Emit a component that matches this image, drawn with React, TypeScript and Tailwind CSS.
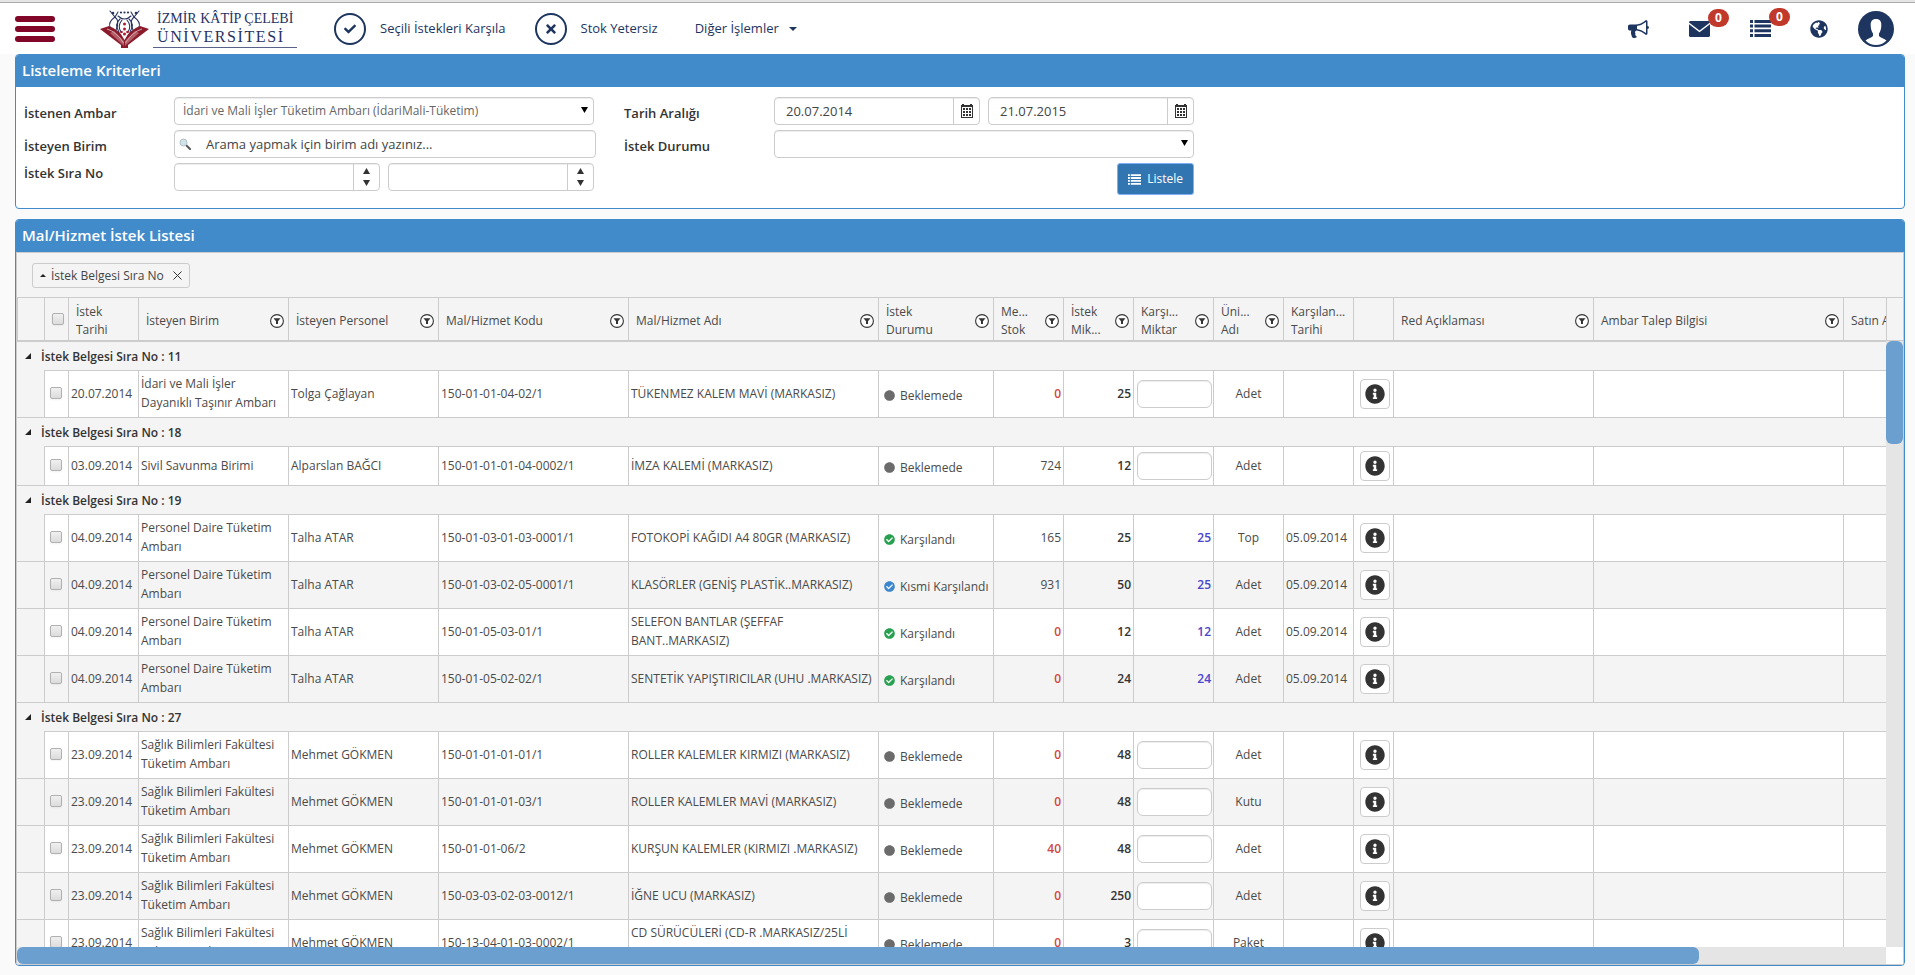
import { ReactNode } from "react";
import clsx from "clsx";
import { FaCheck, FaCheckCircle, FaCircle, FaGlobeAmericas, FaInfoCircle, FaTimes } from "react-icons/fa";

type Status = "Beklemede" | "Karşılandı" | "Kısmi Karşılandı";

type Row = {
  date: string;
  unit: string;
  person: string;
  code: string;
  name: string;
  status: Status;
  stock: number;
  lowStock?: boolean;
  amount: number;
  met?: number;
  measure: string;
  metDate?: string;
};

const columns = [
  { label: "İstek\nTarihi", width: "w-[70px]" },
  { label: "İsteyen Birim", width: "w-[150px]", filter: true },
  { label: "İsteyen Personel", width: "w-[150px]", filter: true },
  { label: "Mal/Hizmet Kodu", width: "w-[190px]", filter: true },
  { label: "Mal/Hizmet Adı", width: "w-[250px]", filter: true },
  { label: "İstek\nDurumu", width: "w-[115px]", filter: true },
  { label: "Me...\nStok", width: "w-[70px]", filter: true },
  { label: "İstek\nMik...", width: "w-[70px]", filter: true },
  { label: "Karşı...\nMiktar", width: "w-[80px]", filter: true },
  { label: "Üni...\nAdı", width: "w-[70px]", filter: true },
  { label: "Karşılan...\nTarihi", width: "w-[70px]" },
  { label: "", width: "w-[40px]" },
  { label: "Red Açıklaması", width: "w-[200px]", filter: true },
  { label: "Ambar Talep Bilgisi", width: "w-[250px]", filter: true },
  { label: "Satın Alma Bilgisi", width: "w-[250px]", filter: true },
];

const personel = { date: "04.09.2014", unit: "Personel Daire Tüketim Ambarı", person: "Talha ATAR", metDate: "05.09.2014" };
const saglik = {
  date: "23.09.2014",
  unit: "Sağlık Bilimleri Fakültesi Tüketim Ambarı",
  person: "Mehmet GÖKMEN",
  status: "Beklemede" as Status,
};

const groups: { no: number; rows: Row[] }[] = [
  {
    no: 11,
    rows: [
      { date: "20.07.2014", unit: "İdari ve Mali İşler Dayanıklı Taşınır Ambarı", person: "Tolga Çağlayan", code: "150-01-01-04-02/1", name: "TÜKENMEZ KALEM MAVİ (MARKASIZ)", status: "Beklemede", stock: 0, lowStock: true, amount: 25, measure: "Adet" },
    ],
  },
  {
    no: 18,
    rows: [
      { date: "03.09.2014", unit: "Sivil Savunma Birimi", person: "Alparslan BAĞCI", code: "150-01-01-01-04-0002/1", name: "İMZA KALEMİ (MARKASIZ)", status: "Beklemede", stock: 724, amount: 12, measure: "Adet" },
    ],
  },
  {
    no: 19,
    rows: [
      { ...personel, code: "150-01-03-01-03-0001/1", name: "FOTOKOPİ KAĞIDI A4 80GR (MARKASIZ)", status: "Karşılandı", stock: 165, amount: 25, met: 25, measure: "Top" },
      { ...personel, code: "150-01-03-02-05-0001/1", name: "KLASÖRLER (GENİŞ PLASTİK..MARKASIZ)", status: "Kısmi Karşılandı", stock: 931, amount: 50, met: 25, measure: "Adet" },
      { ...personel, code: "150-01-05-03-01/1", name: "SELEFON BANTLAR (ŞEFFAF BANT..MARKASIZ)", status: "Karşılandı", stock: 0, lowStock: true, amount: 12, met: 12, measure: "Adet" },
      { ...personel, code: "150-01-05-02-02/1", name: "SENTETİK YAPIŞTIRICILAR (UHU .MARKASIZ)", status: "Karşılandı", stock: 0, lowStock: true, amount: 24, met: 24, measure: "Adet" },
    ],
  },
  {
    no: 27,
    rows: [
      { ...saglik, code: "150-01-01-01-01/1", name: "ROLLER KALEMLER KIRMIZI (MARKASIZ)", stock: 0, lowStock: true, amount: 48, measure: "Adet" },
      { ...saglik, code: "150-01-01-01-03/1", name: "ROLLER KALEMLER MAVİ (MARKASIZ)", stock: 0, lowStock: true, amount: 48, measure: "Kutu" },
      { ...saglik, code: "150-01-01-06/2", name: "KURŞUN KALEMLER (KIRMIZI .MARKASIZ)", stock: 40, lowStock: true, amount: 48, measure: "Adet" },
      { ...saglik, code: "150-03-03-02-03-0012/1", name: "İĞNE UCU (MARKASIZ)", stock: 0, lowStock: true, amount: 250, measure: "Adet" },
      { ...saglik, code: "150-13-04-01-03-0002/1", name: "CD SÜRÜCÜLERİ (CD-R .MARKASIZ/25Lİ PAKET)", stock: 0, lowStock: true, amount: 3, measure: "Paket" },
    ],
  },
];

const field = "h-7 w-full rounded-[4px] border border-[#ccc] bg-white shadow-[inset_0_1px_1px_rgba(0,0,0,0.075)] outline-none";

function Logo() {
  return (
    <svg viewBox="0 0 49 38" className="h-[38px] w-[49px] shrink-0" aria-hidden="true">
      <path d="M0 19 L9 16 Q20 20 24.500 30 Q29 20 40 16 L49 19 L28 35 V38 H21 V35 Z" fill="#8b1a2b" />
      <path d="M7 19 Q17 22 23.500 33 M42 19 Q32 22 25.500 33" fill="none" stroke="#fff" strokeWidth="1" opacity="0.6" />
      <path d="M14 21 L24 31 L24 36 L10 23 Z M35 21 L25 31 L25 36 L39 23 Z" fill="#d9a3a8" opacity="0.5" />
      <g fill="none" stroke="#27325f" strokeWidth="1.100" strokeLinecap="round">
        <path d="M10 1 L15 7 L18 2 M15 7 Q8 12 10 17 M15 7 Q20 11 16 20" />
        <path d="M39 1 L34 7 L31 2 M34 7 Q41 12 39 17 M34 7 Q29 11 33 20" />
        <path d="M18 6 Q24.500 12 31 6 M20 9 Q14 14 19 22 M29 9 Q35 14 30 22 M22 10 Q17 16 21 22 M27 10 Q32 16 28 22" />
      </g>
      <g fill="#27325f">
        <circle cx="13" cy="3" r="1.300" />
        <circle cx="36" cy="3" r="1.300" />
        <circle cx="21" cy="2.500" r="1.100" />
        <circle cx="24.500" cy="2.500" r="1.100" />
        <circle cx="28" cy="2.500" r="1.100" />
      </g>
      <g fill="#b01a2e">
        <circle cx="24.500" cy="14" r="1.500" />
        <circle cx="24.500" cy="19" r="1.500" />
        <circle cx="21.500" cy="22" r="1.300" />
        <circle cx="27.500" cy="22" r="1.300" />
        <circle cx="24.500" cy="24" r="1.500" />
      </g>
    </svg>
  );
}

function ListIcon({ className }: { className: string }) {
  return (
    <svg viewBox="0 0 21 17" className={className} fill="currentColor" aria-hidden="true">
      <path d="M0 0h3v3H0zM0 4.600h3v3H0zM0 9.300h3v3H0zM0 14h3v3H0zM4.500 0H21v3H4.500zM4.500 4.600H21v3H4.500zM4.500 9.300H21v3H4.500zM4.500 14H21v3H4.500z" />
    </svg>
  );
}

function BullhornIcon() {
  return (
    <svg viewBox="0 128 1792 1536" className="h-[18px] w-[21px]" fill="currentColor" aria-hidden="true">
      <path d="M1664 640q53 0 90.500 37.500t37.500 90.500-37.500 90.500-90.500 37.500v384q0 52-38 90t-90 38q-417-347-812-380-58 19-91 66t-31 100.500 40 92.500q-20 33-23 65.500t6 58 33.500 55 48 50 61.500 50.500q-29 58-111.500 83t-168.500 11.500-132-55.500q-7-23-29.500-87.500t-32-94.500-23-89-15-101 3.500-98.500 22-110.500h-122q-66 0-113-47t-47-113v-192q0-66 47-113t113-47h480q435 0 896-384 52 0 90 38t38 90v384zm-128 604v-954q-394 302-768 343v270q377 42 768 341z" />
    </svg>
  );
}

function EnvelopeIcon() {
  return (
    <svg viewBox="0 0 21 16" className="h-4 w-[21px]" fill="currentColor" aria-hidden="true">
      <path d="M1 0h19l1 1v.6L10.500 9.500 0 1.600V1z" />
      <path d="M0 3.200l10.500 8L21 3.200V15l-1 1H1l-1-1z" />
    </svg>
  );
}

function AvatarIcon() {
  return (
    <svg viewBox="0 0 36 36" className="h-9 w-9" aria-hidden="true">
      <circle cx="18" cy="18" r="18" fill="#1d355f" />
      <path d="M18 8c4 0 5.500 2.500 5.300 6.500 0 3.500-1 6-2.300 8v2.500c1.500 2 5.500 2.500 7.500 4.500-3 3.200-6.500 4.500-10.500 4.500S10.500 32.700 7.500 29.500c2-2 6-2.500 7.500-4.500v-2.500c-1.300-2-2.300-4.500-2.300-8C12.500 10.500 14 8 18 8z" fill="#fff" />
    </svg>
  );
}

function CalendarIcon() {
  return (
    <svg viewBox="0 0 12 14" className="h-[14px] w-3" shapeRendering="crispEdges" aria-hidden="true">
      <path d="M0 1h1V0h2v1h6V0h2v1h1v13H0z" fill="#333" />
      <path d="M1 3h10v10H1z" fill="#fff" />
      <path d="M2 4h2v2H2zM5 4h2v2H5zM8 4h2v2H8zM2 7h2v2H2zM5 7h2v2H5zM8 7h2v2H8zM2 10h2v2H2zM5 10h2v2H5zM8 10h2v2H8z" fill="#333" />
    </svg>
  );
}

function FilterIcon() {
  return (
    <svg viewBox="0 0 14 14" className="h-[14px] w-[14px]" aria-hidden="true">
      <circle cx="7" cy="7" r="6.400" fill="#fff" stroke="#333" strokeWidth="1.100" />
      <path d="M3.500 4.300h7L8 7.200V10H6V7.200z" fill="#333" />
    </svg>
  );
}

function Triangle({ up, className }: { up?: boolean; className?: string }) {
  return (
    <svg viewBox="0 0 7 6" className={clsx("h-[6px] w-[7px]", className)} fill="currentColor" aria-hidden="true">
      <path d={up ? "M0 6h7L3.500 0z" : "M0 0h7L3.500 6z"} />
    </svg>
  );
}

function Panel({ title, className, children }: { title: string; className?: string; children: ReactNode }) {
  return (
    <section className={clsx("flex flex-col overflow-hidden rounded-[4px] border border-[#428bca] bg-white", className)}>
      <h2 className="flex h-8 shrink-0 items-center bg-[#428bca] px-[6px] pb-[2px] text-[15px] font-semibold text-white">{title}</h2>
      {children}
    </section>
  );
}

function Badge({ count }: { count: number }) {
  return (
    <span className="absolute -top-3 left-[19px] flex h-[18px] w-[21px] items-center justify-center rounded-full bg-[#c0392b] text-xs font-bold text-white">
      {count}
    </span>
  );
}

function Header() {
  return (
    <header className="flex h-[54px] shrink-0 items-center border-t-2 border-[#e5e5e5] bg-white pt-px pr-[21px] pl-[15px] text-[#1d355f] shadow-[inset_0_1px_0_#aaa]">
      <button type="button" aria-label="Menü" className="flex w-10 flex-col gap-1">
        <span className="h-[6px] rounded-full bg-[#820628]" />
        <span className="h-[6px] rounded-full bg-[#820628]" />
        <span className="h-[6px] rounded-full bg-[#820628]" />
      </button>

      <a href="#" className="ml-[45px] flex w-[197px] items-center gap-1">
        <Logo />
        <span className="flex flex-1 flex-col border-b border-[#5a628c] pb-px pl-1 font-['Liberation_Serif',serif] leading-[18px] text-[#27325f]">
          <span className="text-[14px] whitespace-nowrap">İZMİR KÂTİP ÇELEBİ</span>
          <span className="text-[16px] tracking-widest">ÜNİVERSİTESİ</span>
        </span>
      </a>

      <nav className="ml-[37px] flex items-center gap-[29px] text-[13px]">
        <button type="button" className="flex items-center gap-[14px]">
          <span className="flex h-8 w-8 items-center justify-center rounded-full border-2">
            <FaCheck className="h-3 w-3" />
          </span>
          Seçili İstekleri Karşıla
        </button>
        <button type="button" className="flex items-center gap-[14px]">
          <span className="flex h-8 w-8 items-center justify-center rounded-full border-2">
            <FaTimes className="h-[14px] w-[14px]" />
          </span>
          Stok Yetersiz
        </button>
        <button type="button" className="ml-2 flex items-center gap-[10px]">
          Diğer İşlemler
          <svg viewBox="0 0 8 4" className="h-1 w-2" fill="currentColor" aria-hidden="true">
            <path d="M0 0h8L4 4z" />
          </svg>
        </button>
      </nav>

      <div className="ml-auto flex items-center">
        <button type="button" aria-label="Duyurular">
          <BullhornIcon />
        </button>
        <button type="button" aria-label="Mesajlar" className="relative ml-10">
          <EnvelopeIcon />
          <Badge count={0} />
        </button>
        <button type="button" aria-label="Görevler" className="relative ml-10">
          <ListIcon className="h-[17px] w-[21px]" />
          <Badge count={0} />
        </button>
        <button type="button" aria-label="Dil" className="ml-[39px]">
          <FaGlobeAmericas className="h-[18px] w-[18px]" />
        </button>
        <button type="button" aria-label="Profil" className="ml-[30px]">
          <AvatarIcon />
        </button>
      </div>
    </header>
  );
}

function DateField({ id, label, value }: { id: string; label: string; value: string }) {
  return (
    <div className="relative flex-1">
      <input id={id} aria-label={label} defaultValue={value} className={clsx(field, "pr-8 pl-[11px] text-[#444]")} />
      <button type="button" aria-label="Takvim" className="absolute inset-y-px right-px flex w-[26px] items-center justify-center border-l border-[#ccc]">
        <CalendarIcon />
      </button>
    </div>
  );
}

function SpinField({ id, label }: { id: string; label: string }) {
  return (
    <div className="relative flex-1">
      <input id={id} aria-label={label} className={clsx(field, "pr-8 pl-[11px]")} />
      <div className="absolute inset-y-px right-px flex w-[26px] flex-col items-center justify-center gap-[6px] border-l border-[#ccc] text-[#333]">
        <button type="button" aria-label="Artır">
          <Triangle up />
        </button>
        <button type="button" aria-label="Azalt">
          <Triangle />
        </button>
      </div>
    </div>
  );
}

function SelectField({ id, options }: { id: string; options: string[] }) {
  return (
    <div className="relative w-[420px]">
      <select id={id} className={clsx(field, "appearance-none pr-6 pl-2 text-xs text-[#666]")}>
        {options.map((option) => (
          <option key={option}>{option}</option>
        ))}
      </select>
      <Triangle className="pointer-events-none absolute top-[10px] right-[6px] text-black" />
    </div>
  );
}

function Criteria() {
  return (
    <Panel title="Listeleme Kriterleri" className="shrink-0">
      <form className="grid grid-cols-[150px_450px_150px_420px] items-start gap-y-[5px] pt-[10px] pb-[13px] pl-2 text-[13px] leading-5 text-[#333]">
        <label htmlFor="ambar" className="pt-[6px] font-semibold">İstenen Ambar</label>
        <SelectField id="ambar" options={["İdari ve Mali İşler Tüketim Ambarı (İdariMali-Tüketim)"]} />
        <label htmlFor="tarih" className="pt-[6px] font-semibold">Tarih Aralığı</label>
        <div className="flex gap-2">
          <DateField id="tarih" label="Başlangıç tarihi" value="20.07.2014" />
          <DateField id="tarih-bitis" label="Bitiş tarihi" value="21.07.2015" />
        </div>

        <label htmlFor="birim" className="pt-[6px] font-semibold">İsteyen Birim</label>
        <div className="relative w-[422px]">
          <input
            id="birim"
            placeholder="Arama yapmak için birim adı yazınız..."
            className={clsx(field, "pl-[31px] placeholder:text-[#444]")}
          />
          <svg viewBox="0 0 12 12" className="pointer-events-none absolute top-2 left-[5px] h-3 w-3" aria-hidden="true">
            <path d="M7 7l4 4" stroke="#555" strokeWidth="2" strokeLinecap="round" />
            <circle cx="4.500" cy="4.500" r="3.500" fill="#cfe3ea" stroke="#b4bfc4" />
          </svg>
        </div>
        <label htmlFor="durum" className="pt-[6px] font-semibold">İstek Durumu</label>
        <SelectField id="durum" options={[""]} />

        <label htmlFor="sira" className="font-semibold">İstek Sıra No</label>
        <div className="flex w-[420px] gap-2">
          <SpinField id="sira" label="İlk sıra no" />
          <SpinField id="sira-son" label="Son sıra no" />
        </div>
        <button
          type="button"
          className="col-start-4 flex h-8 items-center gap-[6px] justify-self-end rounded-[3px] border border-[#7fb0f5] bg-[#3276b1] px-[10px] text-xs text-white"
        >
          <ListIcon className="h-[11px] w-[13px]" />
          Listele
        </button>
      </form>
    </Panel>
  );
}

function StatusIcon({ status }: { status: Status }) {
  if (status === "Beklemede") return <FaCircle className="h-[11px] w-[11px] shrink-0 text-[#6b6b6b]" />;
  return (
    <FaCheckCircle
      className={clsx("h-[11px] w-[11px] shrink-0", status === "Karşılandı" ? "text-[#27a050]" : "text-[#3a87cd]")}
    />
  );
}

function Checkbox({ label }: { label: string }) {
  return (
    <input
      type="checkbox"
      aria-label={label}
      className="mx-auto block h-3 w-3 appearance-none rounded-[2px] border border-[#b0b0b0] bg-linear-to-b from-[#f0f0f0] to-[#dcdcdc] shadow-xs"
    />
  );
}

const line = "border-t border-l border-[#ccc]";
const cell = clsx(line, "px-[2px] pt-[3px] pb-[5px]");
const controlCell = clsx(line, "py-1 pr-px pl-[3px]");

function DataRow({ row, index }: { row: Row; index: number }) {
  return (
    <tr className={index % 2 ? "bg-[#f4f4f4]" : "bg-white"}>
      <td className={clsx("bg-[#f4f4f4]", index > 0 && "border-t border-[#ccc]")} />
      <td className={clsx(line, "pr-[2px] pb-[2px]")}>
        <Checkbox label={`${row.code} seç`} />
      </td>
      <td className={cell}>{row.date}</td>
      <td className={cell}>{row.unit}</td>
      <td className={cell}>{row.person}</td>
      <td className={cell}>{row.code}</td>
      <td className={cell}>{row.name}</td>
      <td className={cell}>
        <span className="flex items-center gap-[5px] pt-1 pl-[3px] whitespace-nowrap">
          <StatusIcon status={row.status} />
          {row.status}
        </span>
      </td>
      <td className={clsx(cell, "text-right", row.lowStock && "font-semibold text-[#d04743]")}>{row.stock}</td>
      <td className={clsx(cell, "text-right font-semibold text-[#333]")}>{row.amount}</td>
      {row.met ? (
        <td className={clsx(cell, "text-right font-semibold text-[#4a45cc]")}>{row.met}</td>
      ) : (
        <td className={controlCell}>
          <input
            aria-label="Karşılanan miktar"
            className="block h-7 w-full rounded-[6px] border border-[#ccc] bg-white px-2 shadow-[inset_0_1px_1px_rgba(0,0,0,0.075)] outline-none"
          />
        </td>
      )}
      <td className={clsx(cell, "text-center")}>{row.measure}</td>
      <td className={cell}>{row.metDate}</td>
      <td className={controlCell}>
        <button
          type="button"
          aria-label="Bilgi"
          className="mx-auto flex h-[30px] w-[30px] items-center justify-center rounded-[4px] border border-[#ccc] bg-white text-[#333]"
        >
          <FaInfoCircle className="h-5 w-5" />
        </button>
      </td>
      <td className={cell} />
      <td className={cell} />
      <td className={cell} />
    </tr>
  );
}

function RequestTable() {
  return (
    <table className="w-[2076px] table-fixed border-separate border-spacing-0 text-xs leading-[19px] text-[#4a4a4a]">
      <thead>
        <tr className="h-[43px] bg-[#f4f4f4] text-left leading-[18px]">
          <th className="w-[27px] border-b border-l border-[#ccc]" />
          <th className="w-6 border-b border-l border-[#ccc] pl-[2px]">
            <Checkbox label="Tümünü seç" />
          </th>
          {columns.map((column) => (
            <th key={column.label} className={clsx("border-b border-l border-[#ccc] pt-[3px] pr-1 pl-[7px] font-normal", column.width)}>
              <div className="flex items-center justify-between">
                <span className="whitespace-pre">{column.label}</span>
                {column.filter && (
                  <button type="button" aria-label="Filtrele">
                    <FilterIcon />
                  </button>
                )}
              </div>
            </th>
          ))}
        </tr>
      </thead>
      {groups.map((group) => (
        <tbody key={group.no}>
          <tr className="h-[29px] bg-[#f4f4f4]">
            <td colSpan={17} className="border-t border-[#ccc] pl-[8px] font-semibold text-[#333]">
              <div className="flex items-center gap-[10px]">
                <button type="button" aria-label="Grubu daralt">
                  <svg viewBox="0 0 6 6" className="h-[6px] w-[6px]" aria-hidden="true">
                    <path d="M6 0v6H0z" fill="#222" />
                  </svg>
                </button>
                İstek Belgesi Sıra No : {group.no}
              </div>
            </td>
          </tr>
          {group.rows.map((row, index) => (
            <DataRow key={row.code} row={row} index={index} />
          ))}
        </tbody>
      ))}
    </table>
  );
}

function RequestList() {
  return (
    <Panel title="Mal/Hizmet İstek Listesi" className="min-h-0 flex-1">
      <div className="flex min-h-0 flex-1 flex-col border border-[#ccc]">
        <div className="flex shrink-0 border-b border-[#ccc] bg-[#f4f4f4] px-[15px] pt-[10px] pb-[9px]">
          <span className="flex h-[25px] items-center gap-[5px] rounded-[3px] border border-[#ccc] px-[7px] text-xs text-[#444]">
            <svg viewBox="0 0 6 3" className="h-[3px] w-[6px]" aria-hidden="true">
              <path d="M3 0l3 3H0z" fill="#222" />
            </svg>
            İstek Belgesi Sıra No
            <button type="button" aria-label="Gruplamayı kaldır" className="ml-1">
              <svg viewBox="0 0 9 9" className="h-[9px] w-[9px]" aria-hidden="true">
                <path d="M.5.5l8 8M8.500.5l-8 8" stroke="#333" />
              </svg>
            </button>
          </span>
        </div>

        <div className="flex min-h-0 flex-1">
          <div className="flex min-w-0 flex-1 flex-col">
            <div className="min-h-0 flex-1 overflow-hidden">
              <RequestTable />
            </div>
            <div className="h-[17px] shrink-0 bg-[#e5e5e5]">
              <div className="h-full w-9/10 rounded-[6px] bg-[#6b9fcf]" />
            </div>
          </div>
          <div className="flex w-[17px] shrink-0 flex-col">
            <div className="h-[43px] shrink-0 border-b border-l border-[#ccc] bg-[#f4f4f4]" />
            <div className="flex-1 bg-[#e5e5e5]">
              <div className="h-[17%] rounded-[6px] bg-[#6b9fcf]" />
            </div>
            <div className="h-[17px] shrink-0 bg-white" />
          </div>
        </div>
      </div>
    </Panel>
  );
}

export default function App() {
  return (
    <div className="flex h-screen flex-col overflow-hidden bg-[#fafafa] font-['Open_Sans',sans-serif]">
      <Header />
      <main className="flex min-h-0 flex-1 flex-col gap-[10px] pr-[10px] pb-[9px] pl-[15px]">
        <Criteria />
        <RequestList />
      </main>
    </div>
  );
}
